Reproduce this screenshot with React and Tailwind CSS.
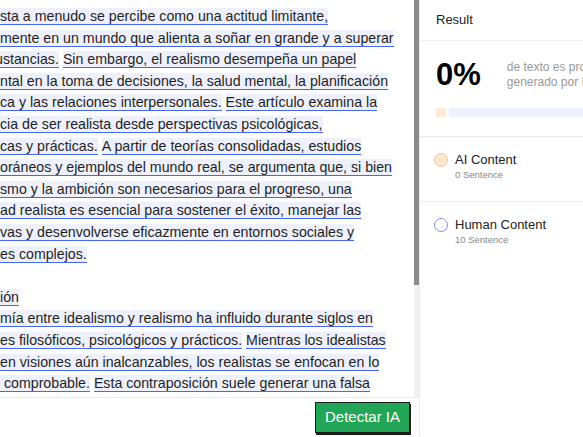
import React from "react";

// pre = part of the line scrolled out of view on the left
const para1 = [
  { pre: "Ser reali", parts: ["sta a menudo se percibe como una actitud limitante,"] },
  { pre: "especial", parts: ["mente en un mundo que alienta a soñar en grande y a superar"] },
  { pre: "las circ", parts: ["ustancias.", "Sin embargo, el realismo desempeña un papel"], cls: "-ml-[5px]" },
  { pre: "fundame", parts: ["ntal en la toma de decisiones, la salud mental, la planificación"] },
  { pre: "estratégi", parts: ["ca y las relaciones interpersonales.", "Este artículo examina la"] },
  { pre: "importan", parts: ["cia de ser realista desde perspectivas psicológicas,"] },
  { pre: "sociológi", parts: ["cas y prácticas.", "A partir de teorías consolidadas, estudios"] },
  { pre: "contemp", parts: ["oráneos y ejemplos del mundo real, se argumenta que, si bien"] },
  { pre: "el optimi", parts: ["smo y la ambición son necesarios para el progreso, una"] },
  { pre: "mentalid", parts: ["ad realista es esencial para sostener el éxito, manejar las"] },
  { pre: "expectati", parts: ["vas y desenvolverse eficazmente en entornos sociales y"] },
  { pre: "personal", parts: ["es complejos."] },
];

const para2 = [
  { pre: "Introducc", parts: ["ión"] },
  { pre: "La dicoto", parts: ["mía entre idealismo y realismo ha influido durante siglos en"] },
  { pre: "los debat", parts: ["es filosóficos, psicológicos y prácticos.", "Mientras los idealistas"] },
  { pre: "piensan ", parts: ["en visiones aún inalcanzables, los realistas se enfocan en lo"] },
  { pre: "factible y", parts: [" comprobable.", "Esta contraposición suele generar una falsa"] },
  { pre: "dicotomía", parts: [" entre soñar y aceptar la realidad tal como es."] },
];

const Line = ({ line }) => (
  <div className={`flex items-start h-[21.6px] ${line.cls || ""}`}>
    <span className="flex w-0 justify-end mt-[3px] leading-[16px]">
      <span className="shrink-0 whitespace-pre">{line.pre}</span>
    </span>
    {line.parts.map((p, i) => (
      <span
        key={i}
        className={`shrink-0 whitespace-pre mt-[3px] leading-[16px] bg-[#eef1fc] border-b border-[#4866f4] ${i > 0 ? "ml-[4px]" : ""}`}
      >
        {p}
      </span>
    ))}
  </div>
);

const App = () => {
  return (
    <div
      className="flex w-[583px] h-[437px] overflow-hidden bg-white"
      style={{ fontFamily: '"Liberation Sans", Arial, sans-serif' }}
    >
      {/* editor */}
      <div className="flex flex-col w-[420px] shrink-0 border-r border-[#ececec]">
        <div className="flex h-[398px] border-b border-[#ececec] overflow-hidden">
          <div className="flex-1 overflow-hidden pt-[5px] text-[14.2px] text-[#1f1f1f]">
            {para1.map((l, i) => (
              <Line key={i} line={l} />
            ))}
            <div className="h-[21.6px]" />
            {para2.map((l, i) => (
              <Line key={i} line={l} />
            ))}
          </div>
          <div className="w-[5px] flex flex-col bg-[#f1f1f1]">
            <div className="h-[285px] bg-[#8c8c8c]" />
          </div>
        </div>
        <div className="flex flex-1 items-center justify-end pr-[9px]">
          <button className="h-[31px] px-[9px] bg-[#21a557] text-white text-[15px] border border-[#1d1d1d] shadow-[1px_2px_0_#1d1d1d]">
            Detectar IA
          </button>
        </div>
      </div>

      {/* result */}
      <div className="flex flex-col w-[260px] shrink-0 text-[#222]">
        <div className="h-[41px] flex items-center px-4 border-b border-[#efefef] text-[13px]">
          Result
        </div>
        <div className="h-[96px] px-4 pt-[18px] border-b border-[#e9e9e9]">
          <div className="flex items-center gap-[26px]">
            <span className="shrink-0 text-[31px] font-bold leading-none text-black">0%</span>
            <span className="shrink-0 text-[12px] leading-[15px] text-[#999] w-[165px]">
              de texto es probablemente generado por IA
            </span>
          </div>
          <div className="flex gap-[3px] mt-[18px]">
            <div className="w-[10px] h-[9px] bg-[#fdebd3]" />
            <div className="flex-1 h-[9px] bg-[#eef2fd]" />
          </div>
        </div>
        <div className="h-[65px] px-[14px] pt-[15px] border-b border-[#e9e9e9]">
          <div className="flex gap-[7px]">
            <span className="mt-[1px] w-[14px] h-[14px] rounded-full border border-[#f3c394] bg-[#fde9d2]" />
            <div>
              <div className="text-[13px] leading-[15px]">AI Content</div>
              <div className="text-[9.5px] text-[#888] mt-[1px]">0 Sentence</div>
            </div>
          </div>
        </div>
        <div className="px-[14px] pt-[15px]">
          <div className="flex gap-[7px]">
            <span className="mt-[1px] w-[14px] h-[14px] rounded-full border border-[#7f8ff2] bg-white" />
            <div>
              <div className="text-[13px] leading-[15px]">Human Content</div>
              <div className="text-[9.5px] text-[#888] mt-[1px]">10 Sentence</div>
            </div>
          </div>
        </div>
      </div>
    </div>
  );
};

export default App;
